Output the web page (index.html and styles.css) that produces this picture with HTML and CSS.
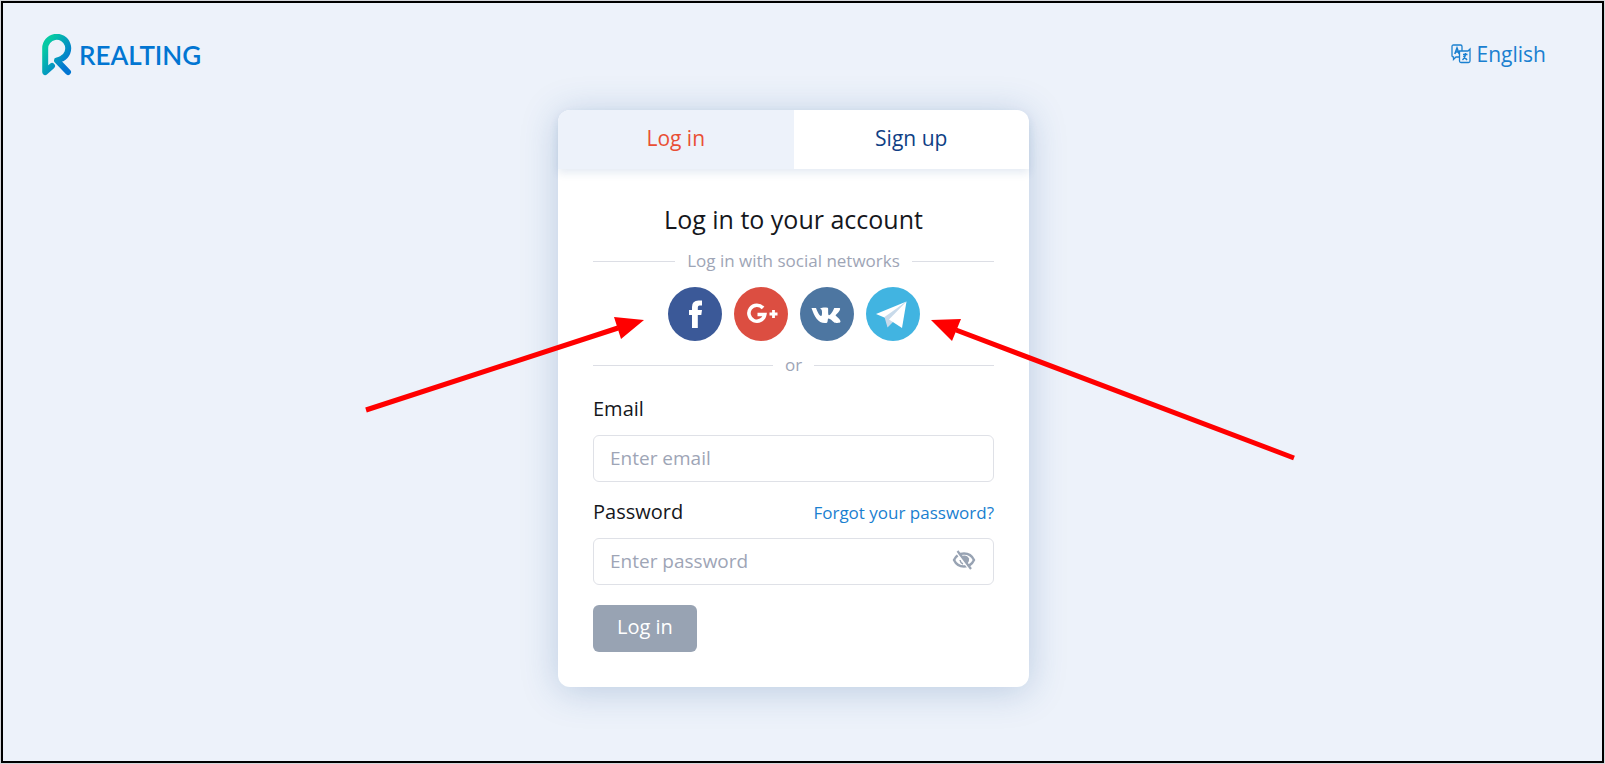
FILE: index.html
```html
<!DOCTYPE html>
<html lang="en">
<head>
  <meta charset="UTF-8">
  <meta name="viewport" content="width=device-width, initial-scale=1.0">
  <title>Log in - Realting</title>
  <link rel="stylesheet" href="styles.css">
</head>
<body>

  <div class="page">
    <header class="header">
      <a href="#" class="logo">
        <svg class="logo-mark" viewBox="0 0 30 42" aria-hidden="true">
          <defs>
            <linearGradient id="logoGradient" x1="0" y1="0" x2="1" y2="1">
              <stop offset="0.15" stop-color="#06c9a4"/>
              <stop offset="0.85" stop-color="#0276d2"/>
            </linearGradient>
          </defs>
          <path d="M10 32 L3.200 38 V14.500 A11.500 11.500 0 1 1 20 24.500 Q17 26.200 15 26.500 L26 38" fill="none" stroke="url(#logoGradient)" stroke-width="6" stroke-linecap="round" stroke-linejoin="round"/>
        </svg>
        <span class="logo-text">REALTING</span>
      </a>
      <button type="button" class="language">
        <svg class="language-icon" viewBox="0 0 20 20" aria-hidden="true">
          <path d="M8.500 13 H5 L2.500 15.500 V13 Q1 13 1 11.500 V2.500 Q1 1 2.500 1 H9.500 Q11 1 11 2.500 V7 H8.500 V17 Q8.500 18.500 10 18.500 H17.500 Q19 18.500 19 17 V5 L17 7 H11"/>
          <path d="M3.800 10 L6 4 L8.200 10 M4.500 8 H7.500" stroke-width="1.600"/>
          <path d="M12 10.500 H16.500 M14.500 9 V10.500 Q14 14 11.500 16 M12.500 12 L16 16" stroke-width="1.600"/>
        </svg>
        English
      </button>
    </header>

    <main class="card">
      <nav class="tabs">
        <a href="#" class="tab active">Log in</a>
        <a href="#" class="tab">Sign up</a>
      </nav>

      <form class="login-form">
        <h1>Log in to your account</h1>
        <div class="divider">Log in with social networks</div>

        <!-- Social networks -->
        <div class="socials">
          <button type="button" class="social facebook" aria-label="Facebook">
            <svg viewBox="0 0 54 54" aria-hidden="true">
              <path d="M24 41 V28 H21 V23 H24 V20 Q24 13.500 30.500 13.500 H34 V18.500 H31.500 Q29.800 18.500 29.800 20.500 V23 H34 L33.300 28 H29.800 V41 Z" fill="#fff"/>
            </svg>
          </button>
          <button type="button" class="social google" aria-label="Google Plus">
            <svg viewBox="0 0 54 54" aria-hidden="true">
              <path d="M29 21 A8 8 0 1 0 30.800 27.500 H23.500" fill="none" stroke="#fff" stroke-width="3.600"/>
              <path d="M39.500 23 V31 M35.500 27 H43.500" stroke="#fff" stroke-width="2.800"/>
            </svg>
          </button>
          <button type="button" class="social vk" aria-label="VK">
            <svg viewBox="0 0 54 54" aria-hidden="true">
              <path d="M11.500 21 H16 C17.500 25 19.500 29 21 29 C22 29 22 27 22 25 C22 22.500 21 22 20 21.800 C21 20.300 27.500 20 28 21 C28.400 22 27.700 28.300 29 28.300 C30.500 28.300 33 24 34.200 21 H39.500 C41 21.300 40 24 35.500 28.300 C37 30 40.500 32.500 40.500 34.500 C40.500 36.500 35 36 34.300 35.500 C32 33.500 29.500 31 28.500 31.500 C27.200 32 28.400 35.500 26.300 36 C18.500 37 14.500 30 11.500 21 Z" fill="#fff"/>
            </svg>
          </button>
          <button type="button" class="social telegram" aria-label="Telegram">
            <svg viewBox="0 0 54 54" aria-hidden="true">
              <path d="M10 27 L40.500 14.500 L19.500 31 Z" fill="#fff"/>
              <path d="M18.500 30 L21.500 40.500 L26.500 35.500 L40.500 14.500 Z" fill="#c8daea"/>
              <path d="M23 32.500 L40.500 14.500 L36 41 Z" fill="#fff"/>
            </svg>
          </button>
        </div>

        <div class="divider">or</div>

        <div class="form-group">
          <label for="email">Email</label>
          <input type="email" id="email" placeholder="Enter email">
        </div>

        <div class="form-group">
          <div class="label-row">
            <label for="password">Password</label>
            <a href="#">Forgot your password?</a>
          </div>
          <div class="password-field">
            <input type="password" id="password" placeholder="Enter password">
            <button type="button" class="toggle" aria-label="Show password">
              <svg viewBox="0 0 24 20" aria-hidden="true">
                <path d="M2 10 Q5 3.500 12 3.500 T22 10 Q19 16.500 12 16.500 T2 10 Z" fill="none" stroke="#98a3b3" stroke-width="2.400"/>
                <path d="M9.500 6 Q15 4.500 17 8.500 Q17.500 12 14.500 14 Z" fill="#98a3b3"/>
                <path d="M8 10 Q8.500 13 11 14" fill="none" stroke="#98a3b3" stroke-width="1.500"/>
                <path d="M4 2 L17 19" stroke="#fff" stroke-width="1.500"/>
                <path d="M5.500 1 L19 19" stroke="#98a3b3" stroke-width="2.200"/>
              </svg>
            </button>
          </div>
        </div>

        <button type="submit" class="submit-btn">Log in</button>
      </form>
    </main>
  </div>

  <!-- Arrows over the page -->
  <svg class="arrows" viewBox="0 0 1605 764" aria-hidden="true">
    <path d="M366 410 L618 328 M1294 458 L956 330" stroke="#f00" stroke-width="5"/>
    <path d="M644 320 L614 317 L621 339 Z M931 320 L961 319 L952 341 Z" fill="#f00"/>
  </svg>

</body>
</html>
```

FILE: styles.css
```css
/* Reset and base styling */
* {
  margin: 0;
  padding: 0;
  box-sizing: border-box;
}

body {
  display: flex;
  min-height: 100vh;
  padding: 1px;
  font-family: 'Open Sans', 'Noto Sans', sans-serif;
  font-size: 19px;
  color: #15171c;
  background-color: #d4d6da;
}

a {
  color: #1a80d0;
  text-decoration: none;
}

button,
input {
  font: inherit;
}

button {
  border: none;
  background: none;
  cursor: pointer;
}

.page {
  flex: 1;
  padding-right: 18px;
  border: 2px solid #000;
  background-color: #edf2fa;
}

/* Header */
.header {
  display: flex;
  justify-content: space-between;
  align-items: center;
  height: 107px;
  padding: 0 38px 4px 39px;
}

.logo {
  display: flex;
  align-items: center;
  gap: 7px;
}

.logo-mark {
  width: 30px;
  height: 42px;
}

.logo-text {
  font-family: Lato, sans-serif;
  font-size: 26px;
  font-weight: 600;
  color: #0276d2;
}

.language {
  display: flex;
  align-items: center;
  gap: 6px;
  padding-bottom: 2px;
  font-size: 21px;
  color: #1a80d0;
}

.language-icon {
  width: 20px;
  height: 20px;
  fill: none;
  stroke: #1a80d0;
  stroke-width: 1.3;
}

/* Login card */
.card {
  width: 471px;
  max-width: 100%;
  margin: 0 auto;
  border-radius: 12px;
  background-color: #fff;
  box-shadow: 0 4px 36px rgba(40, 90, 155, 0.25);
}

.tabs {
  display: grid;
  grid-template-columns: 1fr 1fr;
  border-radius: 12px 12px 0 0;
  overflow: hidden;
  box-shadow: 0 4px 8px rgba(40, 90, 155, 0.12);
}

.tab {
  padding: 14px 0 17px;
  font-size: 21px;
  font-weight: 500;
  line-height: 28px;
  text-align: center;
  color: #0f3f85;
}

.tab.active {
  color: #e94f35;
  background-color: #edf2fa;
}

.login-form {
  padding: 32px 35px 35px;
}

h1 {
  font-size: 25px;
  font-weight: 500;
  line-height: 36px;
  text-align: center;
}

.divider {
  display: flex;
  align-items: center;
  gap: 12px;
  margin: 12px 0;
  font-size: 17px;
  line-height: 24px;
  color: #9ea5b6;
}

.divider::before,
.divider::after {
  content: "";
  flex: 1;
  height: 1px;
  background-color: #dcdee5;
}

.socials {
  display: flex;
  justify-content: center;
  gap: 12px;
  margin-top: 14px;
}

.social {
  width: 54px;
  height: 54px;
  border-radius: 50%;
}

.social svg {
  display: block;
}

.facebook {
  background-color: #3b5998;
}

.google {
  background-color: #dc4e41;
}

.vk {
  background-color: #4d76a1;
}

.telegram {
  background-color: #41b4e1;
}

/* Fields */
.form-group {
  display: flex;
  flex-direction: column;
  gap: 12px;
  margin-top: 16px;
}

.divider + .form-group {
  margin-top: 18px;
}

label {
  font-size: 20px;
  font-weight: 500;
  line-height: 28px;
}

.label-row {
  display: flex;
  justify-content: space-between;
  align-items: center;
}

.label-row a {
  font-size: 17px;
}

input {
  width: 100%;
  height: 47px;
  padding: 0 16px 2px;
  border: 1px solid #dfe1e7;
  border-radius: 6px;
  background-color: #fff;
}

input::placeholder {
  color: #9ea5b6;
}

.password-field {
  position: relative;
}

.toggle {
  position: absolute;
  top: 12px;
  right: 18px;
  width: 24px;
  height: 20px;
}

.toggle svg {
  display: block;
}

.submit-btn {
  height: 47px;
  margin-top: 20px;
  padding: 0 24px 4px;
  border-radius: 6px;
  font-size: 20px;
  font-weight: 500;
  color: #fff;
  background-color: #98a3b3;
}

.arrows {
  position: absolute;
  top: 0;
  left: 0;
  width: 100%;
  pointer-events: none;
}
```
